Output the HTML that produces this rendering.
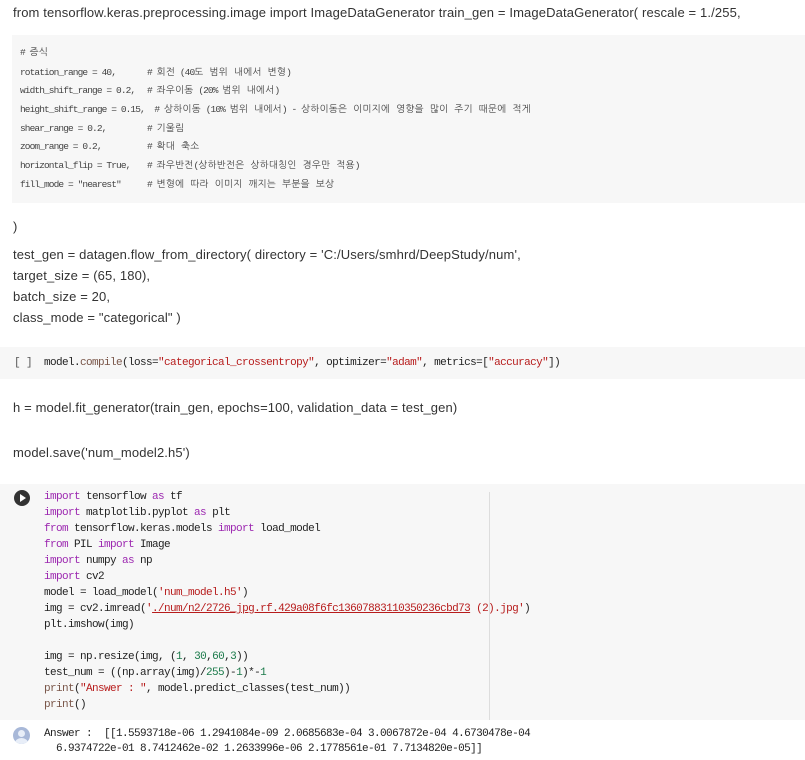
<!DOCTYPE html>
<html><head><meta charset="utf-8"><style>
*{margin:0;padding:0}
body{width:805px;height:760px;background:#fff;position:relative;overflow:hidden;font-family:"Liberation Sans","Noto Sans CJK KR",sans-serif;color:#333}
.t{position:absolute;left:13px;font-size:13px;white-space:pre;line-height:16px;letter-spacing:0.13px}
.g{position:absolute;background:#f7f7f7}
.s{position:absolute;font-family:"Liberation Mono","NanumGothic",monospace;font-size:9.5px;letter-spacing:-0.9px;line-height:11px;white-space:pre;color:#444}
.s b{font-weight:normal;font-size:9.5px;letter-spacing:0.3px}
.c{position:absolute;left:44px;font-family:"Liberation Mono","NanumGothic",monospace;font-size:11px;letter-spacing:-0.6px;line-height:16px;white-space:pre;color:#222}
.k{color:#9c27b0}.r{color:#b71c1c}.n{color:#1b7a4a}.p{color:#795548}
</style></head><body>
<div class="t" style="top:5px">from tensorflow.keras.preprocessing.image import ImageDataGenerator train_gen = ImageDataGenerator( rescale = 1./255,</div>
<div class="g" style="left:12px;top:35px;width:793px;height:168px"></div>
<div class="s" style="left:20px;top:47px"># <b>증식</b></div>
<div class="s" style="left:20px;top:67px">rotation_range = 40,</div><div class="s" style="left:147px;top:67px"># <b>회전</b> (40<b>도 범위 내에서 변형</b>)</div>
<div class="s" style="left:20px;top:85px">width_shift_range = 0.2,</div><div class="s" style="left:147px;top:85px"># <b>좌우이동</b> (20% <b>범위 내에서</b>)</div>
<div class="s" style="left:20px;top:104px">height_shift_range = 0.15,  # <b>상하이동</b> (10% <b>범위 내에서</b>) - <b>상하이동은 이미지에 영향을 많이 주기 때문에 적게</b></div>
<div class="s" style="left:20px;top:123px">shear_range = 0.2,</div><div class="s" style="left:147px;top:123px"># <b>기울림</b></div>
<div class="s" style="left:20px;top:141px">zoom_range = 0.2,</div><div class="s" style="left:147px;top:141px"># <b>확대 축소</b></div>
<div class="s" style="left:20px;top:160px">horizontal_flip = True,</div><div class="s" style="left:147px;top:160px"># <b>좌우반전</b>(<b>상하반전은 상하대칭인 경우만 적용</b>)</div>
<div class="s" style="left:20px;top:179px">fill_mode = "nearest"</div><div class="s" style="left:147px;top:179px"># <b>변형에 따라 이미지 깨지는 부분을 보상</b></div>
<div class="t" style="top:219px">)</div>
<div class="t" style="top:247px">test_gen = datagen.flow_from_directory( directory = 'C:/Users/smhrd/DeepStudy/num',</div>
<div class="t" style="top:268px">target_size = (65, 180),</div>
<div class="t" style="top:289px">batch_size = 20,</div>
<div class="t" style="top:310px">class_mode = "categorical" )</div>
<div class="g" style="left:0;top:347px;width:805px;height:32px"></div>
<div class="c" style="left:14px;top:355px;color:#555">[ ]</div>
<div class="c" style="top:355px">model.<span class="p">compile</span>(loss=<span class="r">"categorical_crossentropy"</span>, optimizer=<span class="r">"adam"</span>, metrics=[<span class="r">"accuracy"</span>])</div>
<div class="t" style="top:400px">h = model.fit_generator(train_gen, epochs=100, validation_data = test_gen)</div>
<div class="t" style="top:445px">model.save('num_model2.h5')</div>
<div class="g" style="left:0;top:484px;width:805px;height:236px"></div>
<div style="position:absolute;left:489px;top:492px;width:1px;height:228px;background:#ddd"></div>
<div style="position:absolute;left:14px;top:490px;width:16px;height:16px;border-radius:50%;background:#333"></div>
<div style="position:absolute;left:20px;top:494px;width:0;height:0;border-left:6px solid #fff;border-top:4px solid transparent;border-bottom:4px solid transparent"></div>
<div class="c" style="top:489px"><span class="k">import</span> tensorflow <span class="k">as</span> tf
<span class="k">import</span> matplotlib.pyplot <span class="k">as</span> plt
<span class="k">from</span> tensorflow.keras.models <span class="k">import</span> load_model
<span class="k">from</span> PIL <span class="k">import</span> Image
<span class="k">import</span> numpy <span class="k">as</span> np
<span class="k">import</span> cv2
model = load_model(<span class="r">'num_model.h5'</span>)
img = cv2.imread(<span class="r">'<u>./num/n2/2726_jpg.rf.429a08f6fc13607883110350236cbd73</u> (2).jpg'</span>)
plt.imshow(img)

img = np.resize(img, (<span class="n">1</span>, <span class="n">30</span>,<span class="n">60</span>,<span class="n">3</span>))
test_num = ((np.array(img)/<span class="n">255</span>)-<span class="n">1</span>)*-<span class="n">1</span>
<span class="p">print</span>(<span class="r">"Answer : "</span>, model.predict_classes(test_num))
<span class="p">print</span>()</div>
<div style="position:absolute;left:13px;top:727px;width:17px;height:17px;border-radius:50%;background:#a8b8d8;overflow:hidden"><div style="position:absolute;left:5px;top:3px;width:7px;height:7px;border-radius:50%;background:#e8eef8"></div><div style="position:absolute;left:2px;top:11px;width:13px;height:10px;border-radius:50%;background:#e8eef8"></div></div>
<div class="c" style="top:727px;line-height:15px">Answer :  [[1.5593718e-06 1.2941084e-09 2.0685683e-04 3.0067872e-04 4.6730478e-04
  6.9374722e-01 8.7412462e-02 1.2633996e-06 2.1778561e-01 7.7134820e-05]]</div>
</body></html>
